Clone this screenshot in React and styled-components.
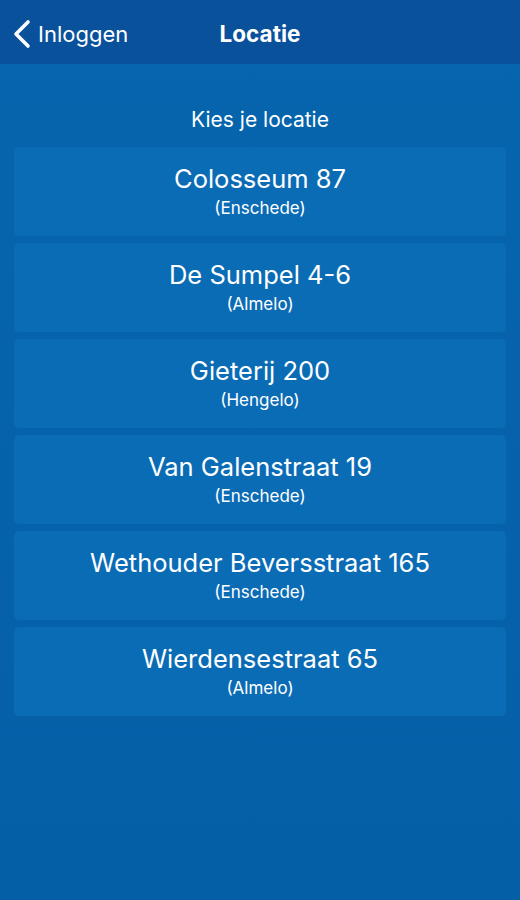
import React from "react";
import styled, { createGlobalStyle } from "styled-components";

const Global = createGlobalStyle`
  html, body { margin: 0; padding: 0; }
  body { background: #0862aa; font-family: Inter, "Noto Sans", sans-serif; }
`;

const Page = styled.div`
  width: 520px;
  min-height: 900px;
  background: linear-gradient(#0665ae, #055fa7);
  color: #fff;
  display: flex;
  flex-direction: column;
`;

const Header = styled.header`
  height: 64px;
  background: #0a519c;
  display: grid;
  grid-template-columns: 1fr auto 1fr;
  align-items: center;
  padding: 3px 12px 0;
  box-sizing: border-box;
`;

const Back = styled.div`
  display: flex;
  align-items: center;
  gap: 6px;
  font-size: 22px;
  color: #fff;
`;

const Title = styled.div`
  font-size: 22.5px;
  font-weight: 700;
`;

const Content = styled.main`
  padding: 0 14px;
  display: flex;
  flex-direction: column;
  gap: 7px;
`;

const Prompt = styled.div`
  text-align: center;
  font-size: 21px;
  padding: 43px 0 7px;
  line-height: 26px;
`;

const Card = styled.button`
  all: unset;
  height: 89px;
  border-radius: 5px;
  background: #0b6cb6;
  display: flex;
  flex-direction: column;
  align-items: center;
  justify-content: center;
  gap: 4px;
  padding-bottom: 1px;
  box-sizing: border-box;
  color: #fff;
`;

const Name = styled.div`
  font-size: 25.5px;
  line-height: 30px;
`;

const City = styled.div`
  font-size: 17px;
  line-height: 20px;
`;

const locations = [
  ["Colosseum 87", "Enschede"],
  ["De Sumpel 4-6", "Almelo"],
  ["Gieterij 200", "Hengelo"],
  ["Van Galenstraat 19", "Enschede"],
  ["Wethouder Beversstraat 165", "Enschede"],
  ["Wierdensestraat 65", "Almelo"],
];

export default function App() {
  return (
    <>
      <Global />
      <Page>
        <Header>
          <Back>
            <svg width="20" height="30" viewBox="0 0 20 30">
              <path d="M16 3 L4 15 L16 27" fill="none" stroke="#fff" strokeWidth="3.6" strokeLinecap="round" strokeLinejoin="round" />
            </svg>
            Inloggen
          </Back>
          <Title>Locatie</Title>
          <div />
        </Header>
        <Content>
          <Prompt>Kies je locatie</Prompt>
          {locations.map(([n, c]) => (
            <Card key={n}>
              <Name>{n}</Name>
              <City>({c})</City>
            </Card>
          ))}
        </Content>
      </Page>
    </>
  );
}
